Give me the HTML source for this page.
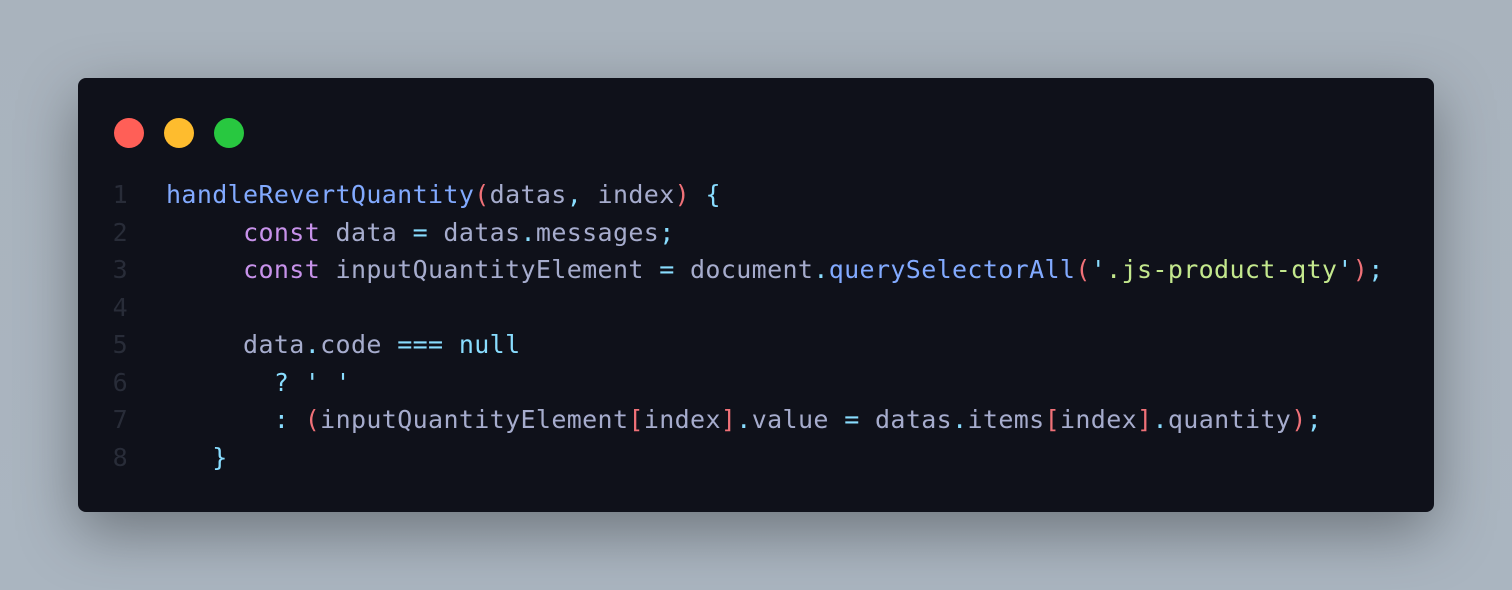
<!DOCTYPE html>
<html><head><meta charset="utf-8"><style>
html,body{margin:0;padding:0}
body{width:1512px;height:590px;overflow:hidden;background:linear-gradient(180deg,#a9b3bd 0%,#aab5c0 100%);position:relative}
.card{position:absolute;left:78px;top:78px;width:1356px;height:434px;background:#0f111a;border-radius:8px;box-shadow:0 20px 60px rgba(0,0,0,0.35)}
.dot{position:absolute;top:118px;width:30px;height:30px;border-radius:50%}
.code{position:absolute;left:0;top:176px;font-family:"DejaVu Sans Mono","Liberation Mono",monospace;font-size:25px;letter-spacing:0.36px;line-height:37.5px;white-space:pre;color:#a6accd}
.ln{position:absolute;left:104px;width:24px;text-align:right;color:#282c38}
.tx{position:absolute;left:166px}
.f{color:#82aaff}.k{color:#c792ea}.s{color:#c3e88d}.r{color:#f07178}.c{color:#89ddff}
</style></head><body>
<div class="card"></div>
<div class="dot" style="left:114px;background:#ff5f57"></div>
<div class="dot" style="left:164px;background:#febc2e"></div>
<div class="dot" style="left:214px;background:#28c840"></div>
<div class="code">
<div class="ln" style="top:0">1</div><div class="tx" style="top:0"><span class="f">handleRevertQuantity</span><span class="r">(</span>datas<span class="c">,</span> index<span class="r">)</span> <span class="c">{</span></div>
<div class="ln" style="top:37.5px">2</div><div class="tx" style="top:37.5px">     <span class="k">const</span> data <span class="c">=</span> datas<span class="c">.</span>messages<span class="c">;</span></div>
<div class="ln" style="top:75px">3</div><div class="tx" style="top:75px">     <span class="k">const</span> inputQuantityElement <span class="c">=</span> document<span class="c">.</span><span class="f">querySelectorAll</span><span class="r">(</span><span class="c">'</span><span class="s">.js-product-qty</span><span class="c">'</span><span class="r">)</span><span class="c">;</span></div>
<div class="ln" style="top:112.5px">4</div>
<div class="ln" style="top:150px">5</div><div class="tx" style="top:150px">     data<span class="c">.</span>code <span class="c">===</span> <span class="c">null</span></div>
<div class="ln" style="top:187.5px">6</div><div class="tx" style="top:187.5px">       <span class="c">? ' '</span></div>
<div class="ln" style="top:225px">7</div><div class="tx" style="top:225px">       <span class="c">:</span> <span class="r">(</span>inputQuantityElement<span class="r">[</span>index<span class="r">]</span><span class="c">.</span>value <span class="c">=</span> datas<span class="c">.</span>items<span class="r">[</span>index<span class="r">]</span><span class="c">.</span>quantity<span class="r">)</span><span class="c">;</span></div>
<div class="ln" style="top:262.5px">8</div><div class="tx" style="top:262.5px">   <span class="c">}</span></div>
</div>
</body></html>
